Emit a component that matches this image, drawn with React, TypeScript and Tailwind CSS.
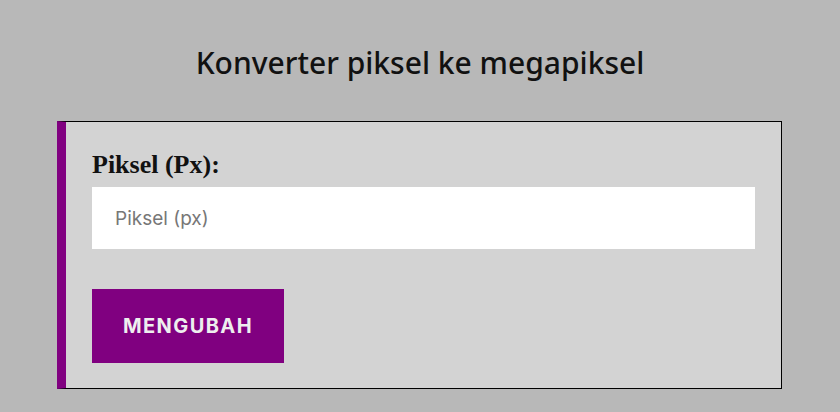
import React from "react";

export default function App() {
  return (
    <div className="min-h-screen w-full bg-[#b8b8b8] pt-[43px]">
      <h1 className="text-center font-['Noto_Sans','Open_Sans',sans-serif] text-[30px] leading-[40px] font-medium text-[#111]">
        Konverter piksel ke megapiksel
      </h1>
      <div className="ml-[57px] mt-[38px] w-[725px] border border-l-[9px] border-black border-l-[#800080] bg-[#d3d3d3] px-[26px] pt-[29px] pb-[25px]">
        <label className="block font-['Liberation_Serif',serif] text-[26px] leading-[28px] font-bold text-[#111]">
          Piksel (Px):
        </label>
        <input
          type="text"
          placeholder="Piksel (px)"
          className="mt-[8px] block h-[62px] w-full bg-white px-[23px] font-['Inter','Liberation_Sans',sans-serif] text-[19px] text-[#333] outline-none placeholder:text-[#777]"
        />
        <button className="mt-[40px] flex h-[74px] w-[192px] items-center justify-center bg-[#800080] font-['Inter','Liberation_Sans',sans-serif] text-[20px] font-bold tracking-[0.07em] text-[#eee]">
          MENGUBAH
        </button>
      </div>
    </div>
  );
}
